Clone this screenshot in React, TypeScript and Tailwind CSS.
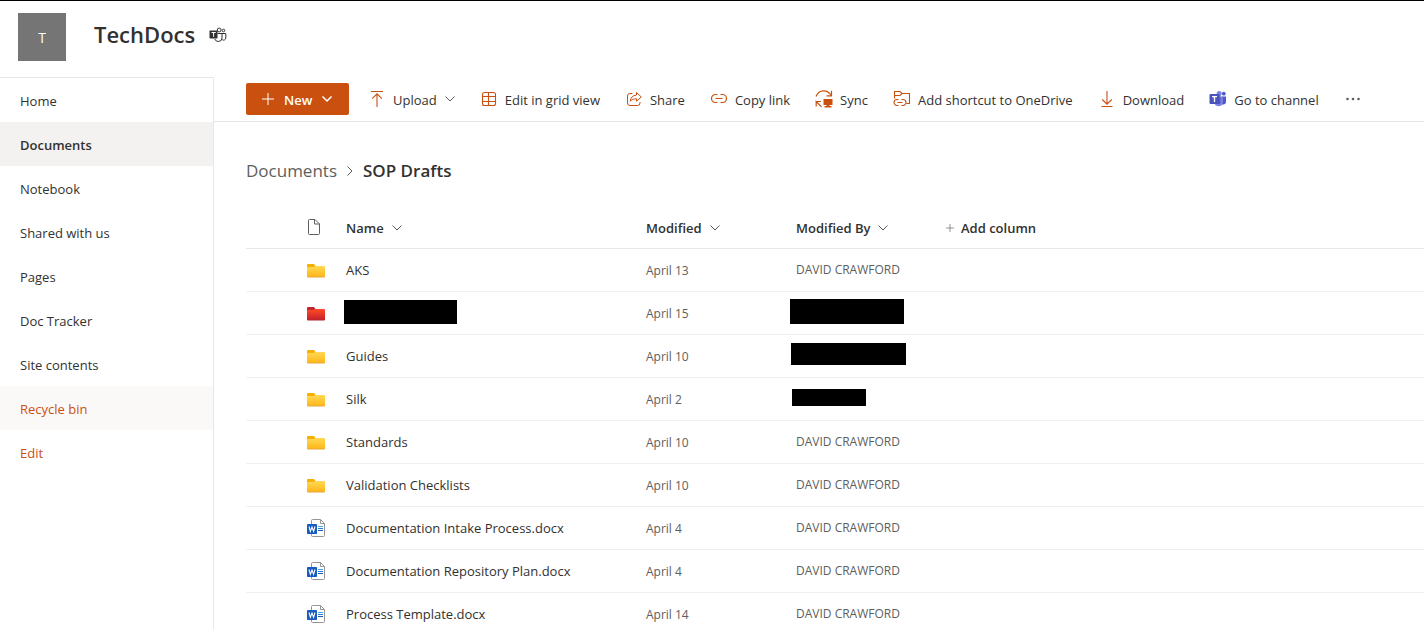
import type { ReactNode } from "react";

type IconProps = { className?: string };

const Svg = ({ className = "size-4", box = "0 0 16 16", children }: { className?: string; box?: string; children: ReactNode }) => (
  <svg viewBox={box} className={`shrink-0 overflow-visible ${className}`} fill="none" stroke="currentColor" aria-hidden="true">
    {children}
  </svg>
);

const Chevron = ({ className = "" }: IconProps) => (
  <Svg box="0 0 10 6" className={`h-1.5 w-2.5 ${className}`}>
    <path d="M.5.5 5 5 9.5.5" />
  </Svg>
);

const PlusIcon = ({ className }: IconProps) => (
  <Svg box="0 0 12 12" className={className}>
    <path d="M6 0v12M0 6h12" />
  </Svg>
);

const UploadIcon = () => (
  <Svg>
    <path d="M2 .5h12M8 16V3M3.2 7.6 8 2.8l4.8 4.8" strokeWidth="1.1" />
  </Svg>
);

const GridIcon = () => (
  <Svg>
    <rect x="1.5" y="1.5" width="13" height="13" rx="2" strokeWidth="1.1" />
    <path d="M1.5 5.5h13M1.5 10.5h13M7.5 1.5v13" strokeWidth="1.1" />
  </Svg>
);

const ShareIcon = () => (
  <Svg>
    <path d="M6.5 2.5H4A2.5 2.5 0 0 0 1.5 5v7A2.5 2.5 0 0 0 4 14.5h7.5A2.5 2.5 0 0 0 14 12v-1" />
    <path d="M10.5 1.5 15.3 6l-4.8 4.2V7.8C7.6 7.8 5.6 8.6 4.3 10.3 4.5 6.8 6.7 4.3 10.5 4z" strokeLinejoin="round" />
  </Svg>
);

const LinkIcon = () => (
  <Svg>
    <path d="M6.5 3.5H4.500a4 4 0 0 0 0 8h2M9.500 3.500h2a4 4 0 0 1 0 8h-2M4.500 7.500h7" strokeWidth="1.200" />
  </Svg>
);

const SyncIcon = () => (
  <Svg box="0 0 18 18" className="size-4.5">
    <path d="M1 6.500C2.500 2.500 5.300.800 8.700.800c3 0 5.500 1.500 7.300 4.200M16.500.800v5h-5M1 11.500h5M1.200 16.500v-5l5.300 5.300" strokeWidth="1.200" />
    <path d="M8.500 9h9v6h-3v1h2v1.500h-7V16h2v-1h-3z" fill="currentColor" stroke="none" />
  </Svg>
);

const ShortcutIcon = () => (
  <Svg box="0 0 18 18" className="size-4.5">
    <path d="M1.500 8.500v-7h5.500l2 2h7.500v10h-3M1.500 5.500H7l2-2M5.500 9.500H4a2.500 2.500 0 0 0 0 6h1.500M8.500 9.500H10a2.500 2.500 0 0 1 0 6H8.500M4.500 12.500h5" strokeWidth="1.100" />
  </Svg>
);

const DownloadIcon = () => (
  <Svg>
    <path d="M2.500 15.500h11M8 0v13M3.300 8.500 8 13.200l4.700-4.700" strokeWidth="1.100" />
  </Svg>
);

const TeamsColorIcon = () => (
  <Svg box="0 0 17 16" className="h-4 w-4.5">
    <g stroke="none">
      <circle cx="14.300" cy="2.700" r="1.900" fill="#5059c9" />
      <path d="M12 5.500h4.500V11a2.800 2.800 0 0 1-4.500 2z" fill="#5059c9" />
      <circle cx="9.700" cy="2.500" r="2.500" fill="#7b83eb" />
      <path d="M5 5.500h8.300v6.200a4.200 4.200 0 0 1-8.300 0z" fill="#7b83eb" />
      <path d="M8.500 4.500H11v8.200H5.500z" fill="#000" opacity=".25" />
      <rect y="3" width="10" height="10" rx="1" fill="#4b53bc" />
      <path d="M2.500 5h5v1.200H5.700V11H4.300V6.200H2.500z" fill="#fff" />
    </g>
  </Svg>
);

const TeamsOutlineIcon = () => (
  <Svg box="0 0 17 16" className="h-4 w-4.5 text-[#323130]">
    <circle cx="9.700" cy="3" r="1.900" />
    <circle cx="14" cy="3.500" r="1.300" />
    <path d="M8 6.500h4.500V11a3.700 3.700 0 0 1-7.200 1M12.500 6.500h3.800V11a2.300 2.300 0 0 1-3.600 1.700" />
    <rect y="3.500" width="8" height="8" rx=".7" fill="currentColor" stroke="none" />
    <path d="M2 5.500h4.200M4.100 5.500v4.300" stroke="#fff" />
  </Svg>
);

const FileIcon = () => (
  <Svg box="0 0 14 18" className="h-4.5 w-3.5 text-[#605e5c]">
    <path d="M1.500 2.500a1 1 0 0 1 1-1H8l4.500 4.500v9.500a1 1 0 0 1-1 1h-9a1 1 0 0 1-1-1zM7.500 1.500V6h5" />
  </Svg>
);

const FolderIcon = ({ red = false }: { red?: boolean }) => (
  <Svg box="0 0 18 14" className="h-3.5 w-4.5">
    <defs>
      <linearGradient id={red ? "folder-red" : "folder-yellow"} x1="0" y1="0" x2="0" y2="1">
        <stop stopColor={red ? "#ff4b26" : "#ffd954"} />
        <stop offset="1" stopColor={red ? "#c8202a" : "#ffb618"} />
      </linearGradient>
    </defs>
    <g stroke="none">
      <path d="M0 1a1 1 0 0 1 1-1h6l1.500 2-1.500 2H0z" fill={red ? "#c4262e" : "#f5b000"} />
      <path d="M0 3h6.500L8.500 2H17a1 1 0 0 1 1 1v10H0z" fill={`url(#${red ? "folder-red" : "folder-yellow"})`} />
      <path d="M0 12.500h18a1 1 0 0 1-1 1H1a1 1 0 0 1-1-1z" fill={red ? "#b5282d" : "#e5a83a"} />
    </g>
  </Svg>
);

const WordIcon = () => (
  <Svg box="0 0 18 18" className="size-4.5">
    <path d="M4.500 1.500a1 1 0 0 1 1-1h8l4 4v12a1 1 0 0 1-1 1h-11a1 1 0 0 1-1-1zM13.500.500v4h4" fill="#fff" stroke="#979593" />
    <path d="M11 7.500h5" stroke="#41a5ee" />
    <path d="M11 9.500h5" stroke="#2b7cd3" />
    <path d="M11 11.500h5" stroke="#185abd" />
    <rect y="5" width="10" height="10" rx=".7" fill="#185abd" stroke="none" />
    <path d="M2 7.500 3.400 12.300 5 8l1.600 4.300L8 7.500" stroke="#fff" strokeWidth="1.100" />
  </Svg>
);

const DotsIcon = () => (
  <Svg>
    <g fill="#605e5c" stroke="none">
      <circle cx="2.500" cy="8" r="1.300" />
      <circle cx="8" cy="8" r="1.300" />
      <circle cx="13.500" cy="8" r="1.300" />
    </g>
  </Svg>
);

const navItems = ["Home", "Documents", "Notebook", "Shared with us", "Pages", "Doc Tracker", "Site contents", "Recycle bin", "Edit"];

const navStyle = (name: string) => {
  if (name === "Documents") return "bg-[#f3f2f1] font-semibold text-[#323130]";
  if (name === "Recycle bin") return "bg-[#faf9f8] text-[#ca5010]";
  if (name === "Edit") return "text-[#ca5010]";
  return "text-[#323130]";
};

const commands: { label: string; icon: ReactNode; menu?: boolean }[] = [
  { label: "Upload", icon: <UploadIcon />, menu: true },
  { label: "Edit in grid view", icon: <GridIcon /> },
  { label: "Share", icon: <ShareIcon /> },
  { label: "Copy link", icon: <LinkIcon /> },
  { label: "Sync", icon: <SyncIcon /> },
  { label: "Add shortcut to OneDrive", icon: <ShortcutIcon /> },
  { label: "Download", icon: <DownloadIcon /> },
  { label: "Go to channel", icon: <TeamsColorIcon /> },
];

type Row = { kind: "folder" | "red" | "word"; name?: string; modified: string; mask?: string };

const rows: Row[] = [
  { kind: "folder", name: "AKS", modified: "April 13" },
  { kind: "red", modified: "April 15", mask: "-ml-1.5 h-[25px] w-[114px]" },
  { kind: "folder", name: "Guides", modified: "April 10", mask: "-ml-[5px] h-[22px] w-[115px]" },
  { kind: "folder", name: "Silk", modified: "April 2", mask: "-ml-1 h-[17px] w-[74px]" },
  { kind: "folder", name: "Standards", modified: "April 10" },
  { kind: "folder", name: "Validation Checklists", modified: "April 10" },
  { kind: "word", name: "Documentation Intake Process.docx", modified: "April 4" },
  { kind: "word", name: "Documentation Repository Plan.docx", modified: "April 4" },
  { kind: "word", name: "Process Template.docx", modified: "April 14" },
];

const HeaderButton = ({ label }: { label: string }) => (
  <button type="button" className="flex items-center gap-2 whitespace-nowrap font-semibold">
    {label}
    <Chevron className="text-[#605e5c]" />
  </button>
);

export default function App() {
  return (
    <div className="flex h-screen flex-col overflow-hidden border-t border-black bg-white font-['Open_Sans','Noto_Sans',sans-serif] text-[13px] leading-5 text-[#323130]">
      <header className="flex h-19 shrink-0 items-start gap-7 px-4.5 pt-3">
        <div className="flex size-12 items-center justify-center bg-[#757575] pt-0.5 text-sm text-white">T</div>
        <div className="flex h-11 items-center gap-3.5">
          <h1 className="pb-0.5 text-[22px] leading-8 font-semibold">TechDocs</h1>
          <TeamsOutlineIcon />
        </div>
      </header>
      <div className="flex min-h-0 flex-1">
        <nav aria-label="Site" className="w-[214px] shrink-0 border-t border-r border-[#e8e8e8]">
          <ul>
            {navItems.map((name) => (
              <li key={name}>
                <a href="#" className={`flex h-11 items-center px-5 pt-0.5 ${navStyle(name)}`}>
                  {name}
                </a>
              </li>
            ))}
          </ul>
        </nav>
        <main className="min-w-0 flex-1">
          <div role="toolbar" aria-label="Commands" className="flex h-[45px] items-center border-b border-[#e8e8e8] pl-8">
            <button type="button" className="mr-[7px] flex h-8 w-[103px] shrink-0 items-center rounded-xs bg-[#ca5010] pl-4 font-semibold text-white">
              <PlusIcon className="mr-2.5 size-3" />
              <span className="pt-0.5">New</span>
              <Chevron className="ml-2.5 [stroke-width:1.5]" />
            </button>
            {commands.map(({ label, icon, menu }) => (
              <button key={label} type="button" className="flex h-8 shrink-0 items-center gap-2 px-[13px] whitespace-nowrap">
                <span className="flex w-4 justify-center text-[#ca5010]">{icon}</span>
                <span className="pt-0.5">{label}</span>
                {menu && <Chevron className="text-[#605e5c]" />}
              </button>
            ))}
            <button type="button" aria-label="More" className="flex h-8 items-center px-[13px]">
              <DotsIcon />
            </button>
          </div>
          <nav aria-label="Breadcrumb" className="flex h-[86px] items-center gap-2.5 pt-3 pl-8 text-[17px] leading-6">
            <a href="#" className="text-[#605e5c]">Documents</a>
            <Svg box="0 0 6 10" className="h-2.5 w-1.5 text-[#605e5c]">
              <path d="M.5.5 5 5 .5 9.500" />
            </Svg>
            <span aria-current="page" className="font-semibold">SOP Drafts</span>
          </nav>
          <div className="pl-8">
            <table className="w-full table-fixed border-separate border-spacing-0 text-left">
              <colgroup>
                <col className="w-[100px]" />
                <col className="w-[300px]" />
                <col className="w-[150px]" />
                <col className="w-[150px]" />
                <col />
              </colgroup>
              <thead>
                <tr className="h-[41px] *:border-b *:border-[#e8e8e8] *:p-0">
                  <th><span className="flex pb-0.5 pl-[61px]"><FileIcon /></span></th>
                  <th><HeaderButton label="Name" /></th>
                  <th><HeaderButton label="Modified" /></th>
                  <th><HeaderButton label="Modified By" /></th>
                  <th>
                    <button type="button" className="flex items-center gap-[7px] font-semibold">
                      <PlusIcon className="size-2 text-[#605e5c]" />
                      Add column
                    </button>
                  </th>
                </tr>
              </thead>
              <tbody>
                {rows.map((row, i) => (
                  <tr key={i} className="h-[43px] *:border-b *:border-[#f0f0f0] *:p-0">
                    <td>
                      <span className="flex pl-[61px]">
                        {row.kind === "word" ? <WordIcon /> : <span className="pt-px"><FolderIcon red={row.kind === "red"} /></span>}
                      </span>
                    </td>
                    <td>
                      {row.name ? <a href="#">{row.name}</a> : <div className="pb-0.5"><span className="-ml-0.5 block h-6 w-[113px] bg-black" /></div>}
                    </td>
                    <td className="text-xs text-[#605e5c]"><div className="pt-0.5">{row.modified}</div></td>
                    <td className="text-xs text-[#605e5c]">
                      {row.mask ? <div className="pb-1"><span className={`block bg-black ${row.mask}`} /></div> : "DAVID CRAWFORD"}
                    </td>
                    <td />
                  </tr>
                ))}
              </tbody>
            </table>
          </div>
        </main>
      </div>
    </div>
  );
}
